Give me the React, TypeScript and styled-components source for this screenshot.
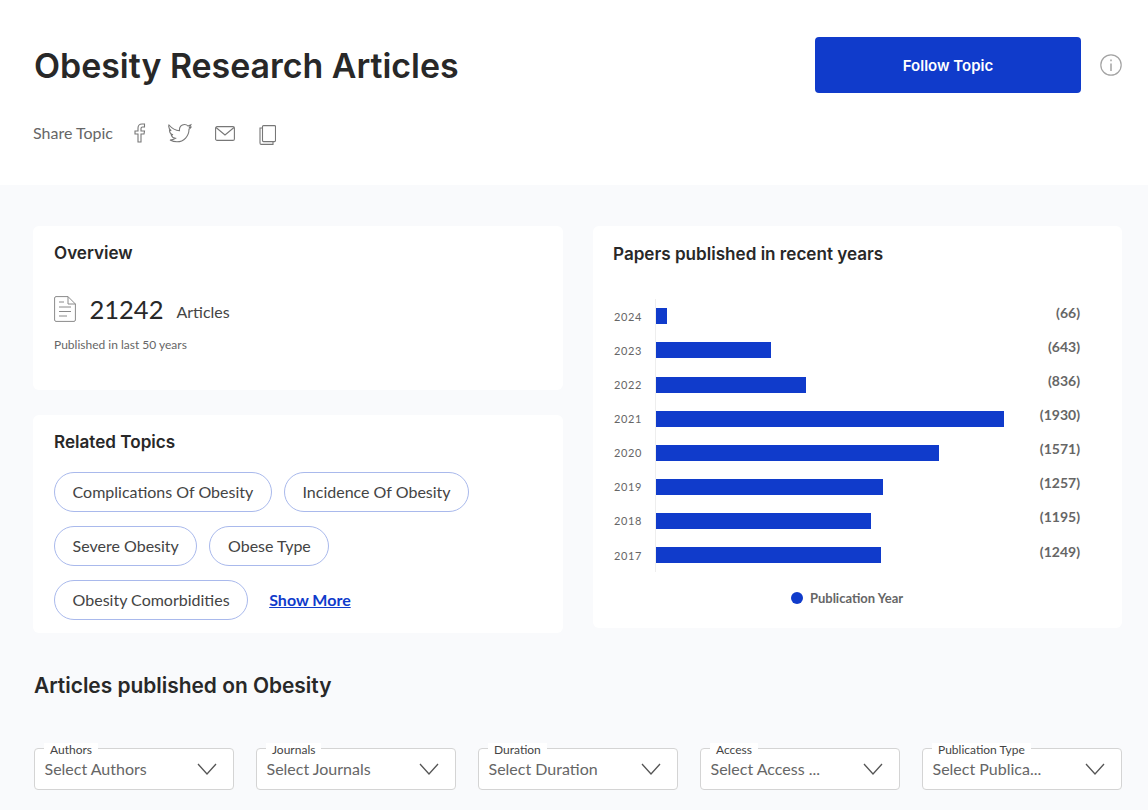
import React from "react";
import styled, { createGlobalStyle } from "styled-components";

const Global = createGlobalStyle`
  html, body { margin: 0; padding: 0; background: #f9fafc; overflow: hidden; }
  * { box-sizing: border-box; }
  body { font-family: "Lato", "Liberation Sans", sans-serif; color: #282828; }
`;

const heading = `font-family: "Inter", "Liberation Sans", sans-serif; color: #282828; margin: 0;`;

const Page = styled.div`
  width: 1148px;
  height: 810px;
  overflow: hidden;
`;
const Header = styled.header`
  background: #fff;
  height: 185px;
  padding: 37px 26px 0 33px;
`;
const TopRow = styled.div`
  display: flex;
  align-items: center;
  justify-content: space-between;
  height: 56px;
`;
const Title = styled.h1`
  ${heading}
  font-size: 33.9px;
  font-weight: 600;
  margin-left: 1px;
`;
const Actions = styled.div`
  display: flex;
  align-items: center;
  gap: 19px;
`;
const FollowButton = styled.button`
  ${heading}
  width: 266px;
  height: 56px;
  border: 0;
  border-radius: 4px;
  background: #103bcb;
  color: #fff;
  font-size: 15px;
  font-weight: 600;
`;
const ShareRow = styled.div`
  display: flex;
  align-items: center;
  height: 26px;
  margin-top: 27px;
  font-size: 16px;
  color: #666;
`;
const ShareLabel = styled.span`
  width: 101px;
  margin-bottom: 2px;
`;
const ShareIcon = styled.svg<{ $gap: number; $left?: number; $top?: number }>`
  display: block;
  margin: ${(p) => p.$top ?? 0}px ${(p) => p.$gap}px 0 ${(p) => p.$left ?? 0}px;
  fill: none;
  stroke: #777;
  stroke-width: 1.1;
`;
const Body = styled.main`
  padding: 41px 26px 0 33px;
`;
const Columns = styled.div`
  display: flex;
  gap: 30px;
  align-items: flex-start;
`;
const LeftColumn = styled.div`
  width: 530px;
  display: flex;
  flex-direction: column;
  gap: 25px;
`;
const Card = styled.section<{ $height: number }>`
  background: #fff;
  border-radius: 6px;
  height: ${(p) => p.$height}px;
  padding: 16px 20px 0 21px;
`;
const RightCard = styled(Card)`
  width: 529px;
  padding: 17px 20px 0;
`;
const CardTitle = styled.h2`
  ${heading}
  font-size: 17.1px;
  line-height: 22px;
  font-weight: 600;
`;
const StatRow = styled.div`
  display: flex;
  align-items: center;
  margin-top: 27px;
  height: 36px;
`;
const StatNumber = styled.span`
  font-size: 25.5px;
  margin-left: 13.5px;
  color: #282828;
`;
const StatLabel = styled.span`
  font-size: 16px;
  margin-left: 13px;
  padding-top: 5px;
  color: #444;
`;
const StatNote = styled.p`
  margin: 10px 0 0;
  font-size: 12px;
  color: #666;
`;
const Chips = styled.div`
  display: flex;
  flex-wrap: wrap;
  align-items: center;
  gap: 14px 12px;
  margin-top: 19px;
  max-width: 450px;
`;
const Chip = styled.span`
  display: inline-flex;
  align-items: center;
  height: 40px;
  padding: 0 17.6px 2px;
  border: 1px solid #a9b9ec;
  border-radius: 20px;
  font-size: 16px;
  color: #444;
`;
const ShowMore = styled.a`
  margin: 0 0 2px 9px;
  font-size: 16px;
  font-weight: 700;
  color: #103bcb;
  text-decoration: underline;
`;
const Chart = styled.div`
  margin: 34.3px 0 0 1px;
`;
const ChartRow = styled.div`
  display: flex;
  align-items: center;
  height: 34.1px;
`;
const Year = styled.span`
  width: 41px;
  font-size: 11px;
  letter-spacing: 0.6px;
  color: #666;
`;
const Track = styled.div`
  flex: 1;
  height: 100%;
  display: flex;
  align-items: center;
  border-left: 1px solid #eee;
`;
const Bar = styled.div`
  height: 16px;
  background: #103bcb;
`;
const Count = styled.span`
  flex: 0 0 70px;
  text-align: right;
  font-size: 14px;
  font-weight: 700;
  color: #666;
  padding-right: 22px;
  margin-top: -8px;
  white-space: nowrap;
`;
const Legend = styled.div`
  display: flex;
  align-items: center;
  justify-content: center;
  gap: 7px;
  margin: 17.5px 0 0 -22px;
  font-size: 13px;
  font-weight: 700;
  color: #666;
`;
const LegendDot = styled.i`
  width: 12px;
  height: 12px;
  border-radius: 50%;
  background: #103bcb;
`;
const SectionTitle = styled.h2`
  ${heading}
  font-size: 20.9px;
  line-height: 28px;
  font-weight: 600;
  margin: 39px 0 0 1px;
`;
const Filters = styled.div`
  display: flex;
  gap: 22px;
  margin: 48px 0 0 1px;
`;
const Select = styled.div`
  position: relative;
  width: 200px;
  height: 42px;
  padding: 0 16px 2px 9.5px;
  display: flex;
  align-items: center;
  justify-content: space-between;
  background: #fff;
  border: 1px solid #d4d4d4;
  border-radius: 4px;
  font-size: 16px;
  color: #666;
`;
const SelectLabel = styled.span`
  position: absolute;
  left: 9px;
  top: -6px;
  padding: 1px 6px 0;
  height: 13px;
  line-height: 12px;
  background: #fff;
  font-size: 12px;
  color: #444;
`;
const Chevron = styled.svg`
  display: block;
  margin-top: 2px;
  fill: none;
  stroke: #555;
  stroke-width: 1.3;
`;

const bars = [
  [2024, 11, 66], [2023, 115, 643], [2022, 150, 836], [2021, 348, 1930],
  [2020, 283, 1571], [2019, 227, 1257], [2018, 215, 1195], [2017, 225, 1249],
];
const chipList = ["Complications Of Obesity", "Incidence Of Obesity", "Severe Obesity", "Obese Type", "Obesity Comorbidities"];
const filters = [
  ["Authors", "Select Authors"], ["Journals", "Select Journals"], ["Duration", "Select Duration"],
  ["Access", "Select Access ..."], ["Publication Type", "Select Publica..."],
];

export default function App() {
  return (
    <Page>
      <Global />
      <Header>
        <TopRow>
          <Title>Obesity Research Articles</Title>
          <Actions>
            <FollowButton>Follow Topic</FollowButton>
            <svg width="22" height="22" viewBox="0 0 22 22" fill="none" stroke="#a3a3a3" strokeWidth="1.2">
              <circle cx="11" cy="11" r="10.2" />
              <path d="M11 9.5V17" strokeWidth="1.5" />
              <path d="M11 5.5V7.2" strokeWidth="1.5" />
            </svg>
          </Actions>
        </TopRow>
        <ShareRow>
          <ShareLabel>Share Topic</ShareLabel>
          <ShareIcon $gap={27} width="12" height="20" viewBox="0 0 12 20">
            <path d="M4 19V11H1V8H4V5C4 2.5 5.5 1 8 1H10.5V4H8.5C7.5 4 7 4.5 7 5.5V8H10.5L10 11H7V19Z" />
          </ShareIcon>
          <ShareIcon $gap={23} $left={-5} width="24" height="20" viewBox="0 0 24 20">
            <path d="M1 2C4 5.500 7.500 7.500 11.500 7.700C11 4 13.500 1.500 16.500 1.500C18 1.500 19.200 2.100 20 3L22.800 1.800L21.500 4.500L23 4.200C22.300 5.200 21.700 5.800 21 6.300C21 13 16 18.800 9 18.800C6 18.800 4 18 2 17C4.500 17 6 16.500 7.500 15.300C5 15 3.700 13.500 3.200 11.800H5C2.700 11 1.500 9 1.500 7.200L3.200 7.800C1 6 .300 4 1 2Z" />
          </ShareIcon>
          <ShareIcon $gap={24} width="20" height="15" viewBox="0 0 20 15">
            <rect x=".6" y=".6" width="18.800" height="13.800" rx="1.500" />
            <path d="M1 1.500L10 9L19 1.500" />
          </ShareIcon>
          <ShareIcon $gap={0} $top={3} width="17" height="20" viewBox="0 0 17 20">
            <rect x="3.500" y=".6" width="13" height="16" rx="1" />
            <path d="M3.500 3H1V18C1 18.800 1.500 19.400 2.300 19.400H14V16.600" />
          </ShareIcon>
        </ShareRow>
      </Header>
      <Body>
        <Columns>
          <LeftColumn>
            <Card $height={164}>
              <CardTitle>Overview</CardTitle>
              <StatRow>
                <svg width="22" height="26" viewBox="0 0 22 26" fill="none" stroke="#8a8a8a" strokeWidth="1">
                  <path d="M14 .6H2C1.200 .6.600 1.200.600 2V24C.600 24.800 1.200 25.400 2 25.400H20C20.800 25.400 21.400 24.800 21.400 24V8Z" />
                  <path d="M14 .6V8H21.400" />
                  <path d="M5 6H10M5 11H17M5 15.500H17M5 20H13" />
                </svg>
                <StatNumber>21242</StatNumber>
                <StatLabel>Articles</StatLabel>
              </StatRow>
              <StatNote>Published in last 50 years</StatNote>
            </Card>
            <Card $height={218}>
              <CardTitle>Related Topics</CardTitle>
              <Chips>
                {chipList.map((c) => (
                  <Chip key={c}>{c}</Chip>
                ))}
                <ShowMore href="#">Show More</ShowMore>
              </Chips>
            </Card>
          </LeftColumn>
          <RightCard $height={402}>
            <CardTitle>Papers published in recent years</CardTitle>
            <Chart>
              {bars.map(([y, w, n]) => (
                <ChartRow key={y}>
                  <Year>{y}</Year>
                  <Track>
                    <Bar style={{ width: w }} />
                  </Track>
                  <Count>({n})</Count>
                </ChartRow>
              ))}
              <Legend>
                <LegendDot />
                Publication Year
              </Legend>
            </Chart>
          </RightCard>
        </Columns>
        <SectionTitle>Articles published on Obesity</SectionTitle>
        <Filters>
          {filters.map(([label, value]) => (
            <Select key={label}>
              <SelectLabel>{label}</SelectLabel>
              {value}
              <Chevron width="20" height="12" viewBox="0 0 20 12">
                <path d="M1 1L10 11L19 1" />
              </Chevron>
            </Select>
          ))}
        </Filters>
      </Body>
    </Page>
  );
}
